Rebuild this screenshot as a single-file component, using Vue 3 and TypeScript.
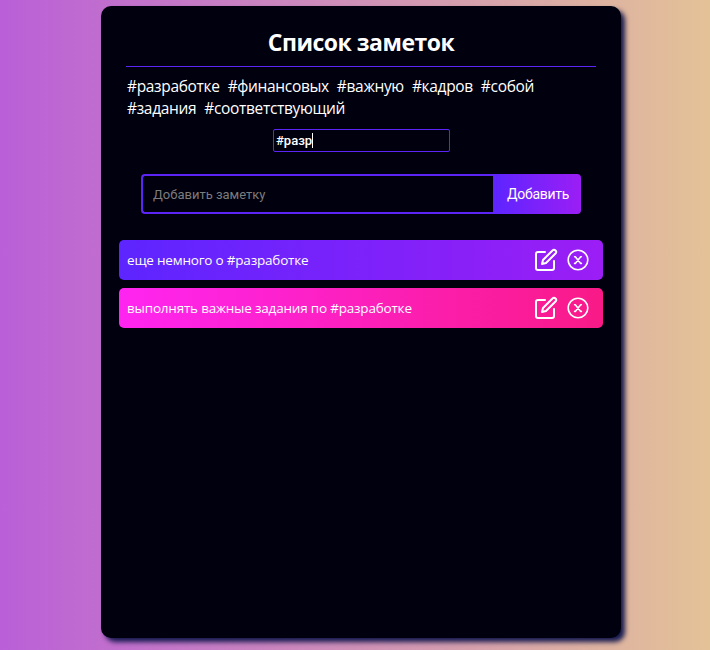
<script setup lang="ts">
import { ref } from 'vue'

interface Note {
  id: number
  text: string
  tone: 'violet' | 'pink'
}

const tags = ref<string[]>([
  '#разработке',
  '#финансовых',
  '#важную',
  '#кадров',
  '#собой',
  '#задания',
  '#соответствующий',
])

const filter = ref('#разр')
const draft = ref('')

const notes = ref<Note[]>([
  { id: 1, text: 'еще немного о #разработке', tone: 'violet' },
  { id: 2, text: 'выполнять важные задания по #разработке', tone: 'pink' },
])

function removeNote(id: number) {
  notes.value = notes.value.filter((note) => note.id !== id)
}
</script>

<template>
  <main class="page">
    <section class="card">
      <h1 class="title">Список заметок</h1>
      <div class="tags">
        <span v-for="tag in tags" :key="tag" class="tag">{{ tag }}</span>
      </div>
      <div class="filter" role="textbox">
        <span>{{ filter }}</span><i class="caret"></i>
      </div>
      <form class="add" @submit.prevent>
        <input v-model="draft" class="add-input" placeholder="Добавить заметку" />
        <button class="add-button">Добавить</button>
      </form>
      <ul class="notes">
        <li v-for="note in notes" :key="note.id" class="note" :class="note.tone">
          <span class="note-text">{{ note.text }}</span>
          <svg class="icon" viewBox="0 0 24 24">
            <path d="M11 4H4a2 2 0 0 0-2 2v14a2 2 0 0 0 2 2h14a2 2 0 0 0 2-2v-7" />
            <path d="M18.500 2.500a2.121 2.121 0 0 1 3 3L12 15l-4 1 1-4 9.500-9.500z" />
          </svg>
          <svg class="icon close" viewBox="0 0 24 24" @click="removeNote(note.id)">
            <circle cx="12" cy="12" r="9.800" />
            <path class="cross" d="M8.600 8.800h.7l5.400 6.600h.7M15.400 8.800h-.7l-5.400 6.600h-.7" />
          </svg>
        </li>
      </ul>
    </section>
  </main>
</template>

<style>
body {
  margin: 0;
}
</style>

<style scoped>
.page {
  box-sizing: border-box;
  height: 650px;
  padding-top: 6px;
  background: linear-gradient(90deg, #ba5fd8, #e4c297);
  font-family: "Open Sans", "Noto Sans", sans-serif;
  overflow: hidden;
}

.card {
  box-sizing: border-box;
  width: 520px;
  height: 632px;
  margin: 0 auto 0 101px;
  padding: 12px 18px 0;
  border-radius: 10px;
  background: #00000f;
  box-shadow: 4px 4px 5px #161a4f;
  color: #fff;
}

.title {
  height: 48px;
  margin: 0 7px;
  border-bottom: 1px solid #5d25f5;
  font-size: 23px;
  line-height: 48px;
  font-weight: 700;
  text-align: center;
  letter-spacing: -0.5px;
}

.tags {
  display: flex;
  flex-wrap: wrap;
  gap: 0 8px;
  margin: 8px 8px 0;
  font-size: 15.5px;
  line-height: 22px;
  letter-spacing: -0.33px;
}

.filter {
  box-sizing: border-box;
  display: flex;
  align-items: center;
  width: 177px;
  height: 23px;
  margin: 10px auto 0 154px;
  padding: 0 2px;
  border: 1px solid #5d25f5;
  border-radius: 2px;
  font: 500 13px Roboto, sans-serif;
}

.caret {
  width: 1px;
  height: 15px;
  background: #fff;
}

.add {
  display: flex;
  height: 40px;
  margin: 22px 22px 26px;
}

.add-input {
  box-sizing: border-box;
  width: 352px;
  padding: 0 10px;
  border: 2px solid #5d25f5;
  border-right: 0;
  border-radius: 4px 0 0 4px;
  outline: 0;
  background: transparent;
  color: #fff;
  font: 13px Roboto, sans-serif;
}

.add-input::placeholder {
  color: #7c7c7c;
}

.add-button {
  flex: 1;
  padding: 0 0 0 2px;
  border: 0;
  border-radius: 0 4px 4px 0;
  background: linear-gradient(90deg, #5d25ff, #9b1ef5);
  color: #fff;
  font: 14px Roboto, sans-serif;
  letter-spacing: -0.3px;
}

.notes {
  display: grid;
  gap: 8px;
  margin: 0;
  padding: 0;
  list-style: none;
}

.note {
  display: flex;
  align-items: center;
  gap: 8px;
  height: 40px;
  padding: 0 13px 0 8px;
  box-sizing: border-box;
  border-radius: 5px;
}

.violet {
  background: linear-gradient(90deg, #5d25ff, #9b1ef5);
}

.pink {
  background: linear-gradient(90deg, #ff25f1, #f91a87);
}

.note-text {
  flex: 1;
  font-size: 13.5px;
  line-height: 18px;
  padding-bottom: 1px;
  letter-spacing: -0.2px;
}

.icon {
  width: 24px;
  height: 24px;
  fill: none;
  stroke: #fff;
  stroke-width: 2;
  stroke-linejoin: round;
  stroke-linecap: round;
}

.close {
  stroke-width: 1.6;
}

.cross {
  stroke-width: 1.6;
}
</style>
